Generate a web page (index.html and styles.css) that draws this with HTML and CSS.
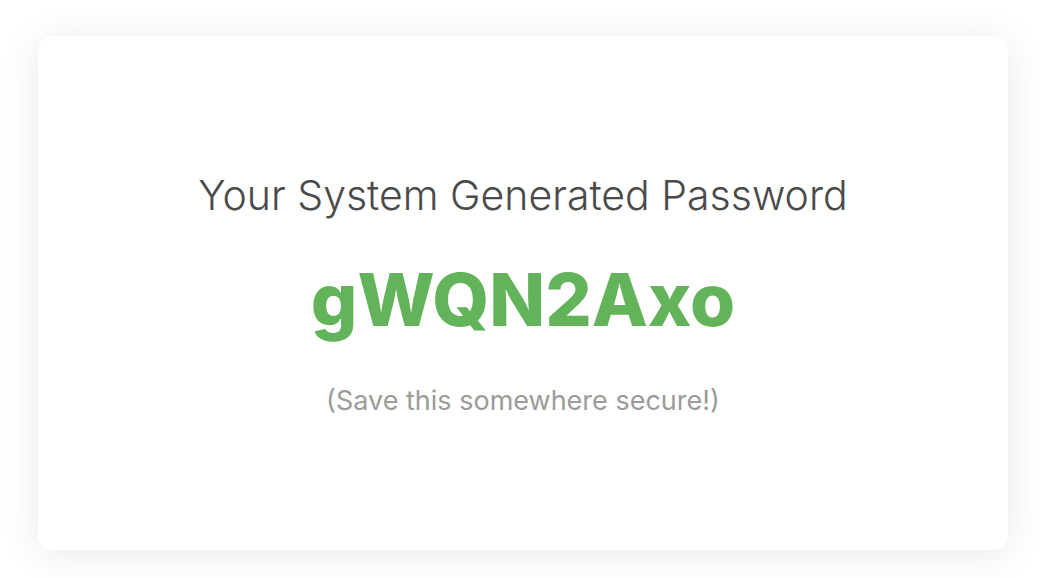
FILE: index.html
```html
<!DOCTYPE html>
<html>
<head>
<meta charset="utf-8">
<link rel="stylesheet" href="styles.css">
</head>
<body>
<div class="page">
  <div class="card">
    <h1 class="title">Your System Generated Password</h1>
    <div class="password">gWQN2Axo</div>
    <p class="note">(Save this somewhere secure!)</p>
  </div>
</div>
</body>
</html>
```
FILE: styles.css
```css
html, body {
  margin: 0;
  padding: 0;
  background: #ffffff;
}
.page {
  width: 1050px;
  height: 578px;
  box-sizing: border-box;
  padding: 36px 42px 28px 38px;
  display: flex;
}
.card {
  flex: 1;
  background: #ffffff;
  border-radius: 14px;
  box-shadow: 0 4px 40px rgba(0, 0, 0, 0.09);
  display: flex;
  flex-direction: column;
  align-items: center;
  justify-content: flex-start;
  padding-top: 135px;
  font-family: Inter, "Open Sans", sans-serif;
}
.title {
  margin: 0;
  font-size: 41px;
  font-weight: 300;
  color: #4a4a4a;
  line-height: 48px;
}
.password {
  margin-top: 41px;
  font-size: 73px;
  font-weight: 800;
  color: #63b35a;
  line-height: 80px;
}
.note {
  margin: 45px 0 0;
  font-size: 27px;
  font-weight: 400;
  color: #9b9b9b;
  line-height: 32px;
}
```
